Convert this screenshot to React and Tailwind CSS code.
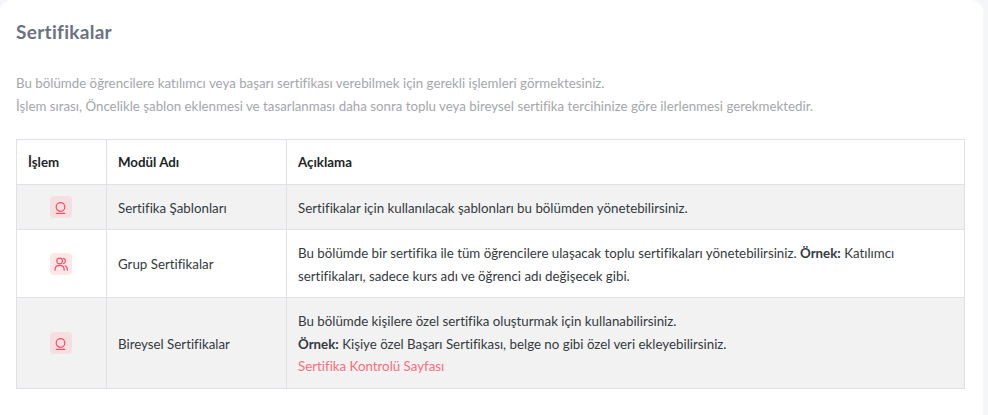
import React from 'react';

// Madalya simgesi (sertifika satırları)
function AwardIcon() {
    return (
        <svg width="14" height="14" viewBox="0 0 14 14" fill="none" stroke="#ff4d5e" strokeWidth="1.2" strokeLinecap="round">
            <circle cx="6.5" cy="7" r="4.3" />
            <path d="M2.4 13.4h8.2" />
        </svg>
    );
}

// Kullanıcı grubu simgesi
function UsersIcon() {
    return (
        <svg width="14" height="14" viewBox="0 0 14 14" fill="none" stroke="#ff4d5e" strokeWidth="1.2" strokeLinecap="round" strokeLinejoin="round">
            <circle cx="5.6" cy="4" r="2.8" />
            <path d="M1 13.2c0-3 2-4.8 4.6-4.8s4.6 1.8 4.6 4.8" />
            <path d="M9.4 1.4c1.2.3 2 1.4 2 2.6s-.8 2.3-2 2.6" />
            <path d="M11.2 8.8c1.4.6 2.2 2.2 2.2 4.4" />
        </svg>
    );
}

function IconBadge({ tone, children }) {
    return (
        <span className={`ml-[22px] flex h-[22px] w-[22px] items-center justify-center rounded-[4px] ${tone}`}>
            {children}
        </span>
    );
}

const headCell = 'border border-[#dee2e6] px-[11px] py-[10px] text-left font-bold text-[#212529]';
const iconCell = 'border border-[#dee2e6] px-[11px] py-[10px] align-middle';
const cell = 'border border-[#dee2e6] px-[11px] pt-[11px] pb-[9px] align-middle';

function App() {
    return (
        <div className="h-[415px] overflow-hidden bg-[#f5f6fa] pr-[5px] font-['Lato','Noto_Sans',sans-serif] text-[13.3px] text-[#343a40] [font-variant-ligatures:none]">
            <div className="h-[440px] rounded-xl bg-white px-4 pt-5">
                <h2 className="text-[19px] leading-[24px] font-bold tracking-[0.3px] text-[#6b7280]">Sertifikalar</h2>
                <div className="mt-[28px] leading-[23px] text-[#a3a7ab]">
                    <p>Bu bölümde öğrencilere katılımcı veya başarı sertifikası verebilmek için gerekli işlemleri görmektesiniz.</p>
                    <p>İşlem sırası, Öncelikle şablon eklenmesi ve tasarlanması daha sonra toplu veya bireysel sertifika tercihinize göre ilerlenmesi gerekmektedir.</p>
                </div>
                <table className="mt-[21px] w-[949px] table-fixed border-collapse leading-[23px]">
                    <colgroup>
                        <col className="w-[90px]" />
                        <col className="w-[180px]" />
                        <col />
                    </colgroup>
                    <thead>
                        <tr className="h-[45px]">
                            <th className={headCell}>İşlem</th>
                            <th className={headCell}>Modül Adı</th>
                            <th className={headCell}>Açıklama</th>
                        </tr>
                    </thead>
                    <tbody>
                        <tr className="h-[45px] bg-[#f2f2f2]">
                            <td className={iconCell}><IconBadge tone="bg-[#f6dfe1]"><AwardIcon /></IconBadge></td>
                            <td className={cell}>Sertifika Şablonları</td>
                            <td className={cell}>Sertifikalar için kullanılacak şablonları bu bölümden yönetebilirsiniz.</td>
                        </tr>
                        <tr className="h-[68px]">
                            <td className={iconCell}><IconBadge tone="bg-[#ffe6e9]"><UsersIcon /></IconBadge></td>
                            <td className={cell}>Grup Sertifikalar</td>
                            <td className={cell}>
                                Bu bölümde bir sertifika ile tüm öğrencilere ulaşacak toplu sertifikaları yönetebilirsiniz. <b>Örnek:</b> Katılımcı sertifikaları, sadece kurs adı ve öğrenci adı değişecek gibi.
                            </td>
                        </tr>
                        <tr className="h-[91px] bg-[#f2f2f2]">
                            <td className={iconCell}><IconBadge tone="bg-[#f6dfe1]"><AwardIcon /></IconBadge></td>
                            <td className={cell}>Bireysel Sertifikalar</td>
                            <td className={`${cell} leading-[22.5px]`}>
                                <div>Bu bölümde kişilere özel sertifika oluşturmak için kullanabilirsiniz.</div>
                                <div><b>Örnek:</b> Kişiye özel Başarı Sertifikası, belge no gibi özel veri ekleyebilirsiniz.</div>
                                <a href="#" className="text-[#ff6b7d]">Sertifika Kontrolü Sayfası</a>
                            </td>
                        </tr>
                    </tbody>
                </table>
            </div>
        </div>
    );
}

export default App;
